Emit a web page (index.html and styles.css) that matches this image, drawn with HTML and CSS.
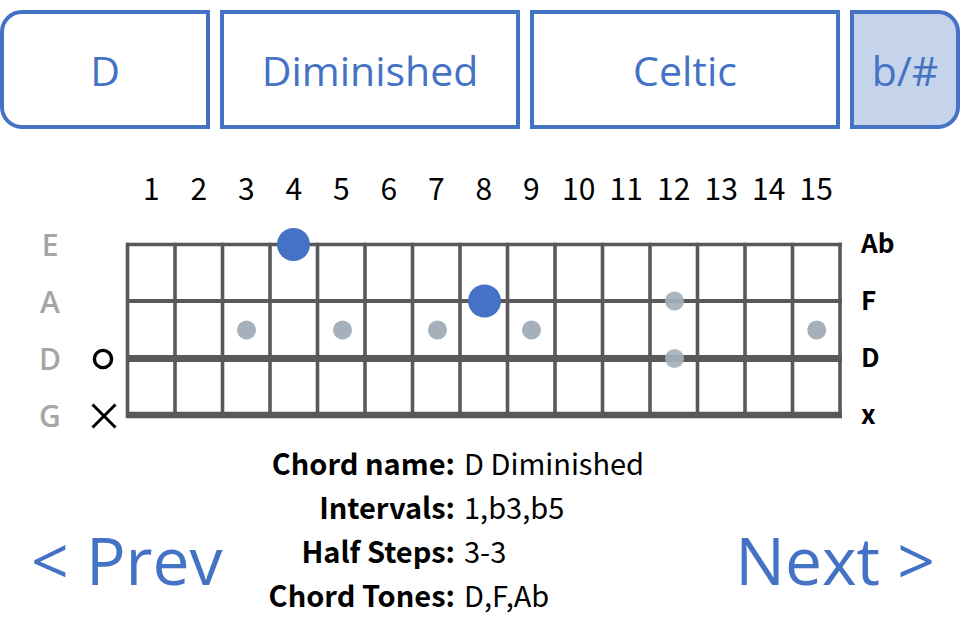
FILE: index.html
```html
<!DOCTYPE html>
<html>
<head>
<meta charset="utf-8">
<link rel="stylesheet" href="styles.css">
</head>
<body>
<div class="app">
  <div class="topbar">
    <div class="btn btn-first">D</div>
    <div class="btn btn-type">Diminished</div>
    <div class="btn btn-scale">Celtic</div>
    <div class="btn btn-last">b/#</div>
  </div>

  <div class="neck">
    <div class="frets">
      <span>1</span><span>2</span><span>3</span><span>4</span><span>5</span>
      <span>6</span><span>7</span><span>8</span><span>9</span><span>10</span>
      <span>11</span><span>12</span><span>13</span><span>14</span><span>15</span>
    </div>

    <div class="names">
      <span>E</span><span>A</span><span>D</span><span>G</span>
    </div>

    <div class="opens">
      <span></span>
      <span></span>
      <span><svg width="24" height="24" viewBox="0 0 24 24"><circle cx="12" cy="12" r="8.6" fill="none" stroke="#000" stroke-width="3.4"/></svg></span>
      <span><svg width="26" height="26" viewBox="0 0 26 26"><path d="M1.5 1.5 L24.5 24.5 M24.5 1.5 L1.5 24.5" stroke="#000" stroke-width="3" fill="none"/></svg></span>
    </div>

    <svg class="board" width="730" height="224" viewBox="0 0 730 224">
      <g fill="#a5b0ba">
        <circle cx="126.5" cy="114" r="9.5"/>
        <circle cx="222.5" cy="114" r="9.5"/>
        <circle cx="317.5" cy="114" r="9.5"/>
        <circle cx="411.5" cy="114" r="9.5"/>
        <circle cx="696.75" cy="114" r="9.5"/>
      </g>
      <g stroke="#595959" fill="none">
        <line x1="6" y1="28.5" x2="722" y2="28.5" stroke-width="3.5"/>
        <line x1="6" y1="85" x2="722" y2="85" stroke-width="4"/>
        <line x1="6" y1="142.5" x2="722" y2="142.5" stroke-width="7"/>
        <line x1="6" y1="199" x2="722" y2="199" stroke-width="6.5"/>
        <g stroke-width="3.6">
          <line x1="7.5" y1="26.75" x2="7.5" y2="202"/>
          <line x1="55" y1="26.75" x2="55" y2="202"/>
          <line x1="102.5" y1="26.75" x2="102.5" y2="202"/>
          <line x1="150" y1="26.75" x2="150" y2="202"/>
          <line x1="197.5" y1="26.75" x2="197.5" y2="202"/>
          <line x1="245" y1="26.75" x2="245" y2="202"/>
          <line x1="292.5" y1="26.75" x2="292.5" y2="202"/>
          <line x1="340" y1="26.75" x2="340" y2="202"/>
          <line x1="387.5" y1="26.75" x2="387.5" y2="202"/>
          <line x1="435" y1="26.75" x2="435" y2="202"/>
          <line x1="482.5" y1="26.75" x2="482.5" y2="202"/>
          <line x1="530" y1="26.75" x2="530" y2="202"/>
          <line x1="577.5" y1="26.75" x2="577.5" y2="202"/>
          <line x1="625" y1="26.75" x2="625" y2="202"/>
          <line x1="672.5" y1="26.75" x2="672.5" y2="202"/>
          <line x1="720" y1="26.75" x2="720" y2="202"/>
        </g>
      </g>
      <g fill="#a5b0ba" fill-opacity="0.92">
        <circle cx="554.5" cy="85" r="9.5"/>
        <circle cx="554.5" cy="142.5" r="9.5"/>
      </g>
      <g fill="#4472c4">
        <circle cx="173.5" cy="28.5" r="16.5"/>
        <circle cx="364.5" cy="85" r="16.5"/>
      </g>
    </svg>

    <div class="notes">
      <span>Ab</span><span>F</span><span>D</span><span>x</span>
    </div>
  </div>

  <div class="bottom">
    <div class="nav nav-prev">&lt; Prev</div>
    <div class="info">
      <span class="label">Chord name:</span><span class="value">D Diminished</span>
      <span class="label">Intervals:</span><span class="value">1,b3,b5</span>
      <span class="label">Half Steps:</span><span class="value">3-3</span>
      <span class="label">Chord Tones:</span><span class="value">D,F,Ab</span>
    </div>
    <div class="nav nav-next">Next &gt;</div>
  </div>
</div>
</body>
</html>
```

FILE: styles.css
```css
html, body {
  margin: 0;
  padding: 0;
  background: #ffffff;
}

.app {
  width: 960px;
  height: 640px;
  overflow: hidden;
  font-family: "Open Sans", "Noto Sans", sans-serif;
}

.topbar {
  display: flex;
  gap: 10px;
  padding-top: 10px;
  height: 119px;
}

.btn {
  box-sizing: border-box;
  height: 119px;
  border: 4px solid #4472c4;
  color: #4472c4;
  font-size: 41px;
  display: flex;
  align-items: center;
  justify-content: center;
  background: #ffffff;
}

.btn-first {
  width: 210px;
  border-radius: 22px 0 0 22px;
}

.btn-type {
  width: 300px;
}

.btn-scale {
  width: 310px;
}

.btn-last {
  width: 110px;
  background: #c5d4ea;
  border-radius: 0 22px 22px 0;
}

.neck {
  display: grid;
  grid-template-columns: 80px 40px 730px 110px;
  grid-template-rows: 40px 224px;
  row-gap: 9px;
  margin-top: 38px;
}

.frets {
  grid-column: 3;
  grid-row: 1;
  display: grid;
  grid-template-columns: repeat(15, 47.5px);
  padding-left: 7.5px;
  font-family: "Noto Sans CJK KR", "Noto Sans", sans-serif;
  font-size: 30px;
  line-height: 40px;
  color: #000000;
  text-align: center;
}

.names,
.opens,
.notes {
  grid-row: 2;
  display: grid;
  grid-template-rows: repeat(4, 57px);
  align-self: start;
}

.names {
  grid-column: 1;
  padding-left: 20px;
  font-family: "Open Sans", sans-serif;
  font-weight: 600;
  font-size: 30px;
  color: #a6a6a6;
  text-align: center;
}

.names span {
  line-height: 57px;
}

.opens {
  grid-column: 2;
}

.opens span {
  display: flex;
  align-items: center;
  padding-left: 11px;
}

.board {
  grid-column: 3;
  grid-row: 2;
  display: block;
}

.notes {
  grid-column: 4;
  margin-top: -3px;
  padding-left: 11px;
  font-family: "Noto Sans CJK KR", "Noto Sans", sans-serif;
  font-weight: 700;
  font-size: 26px;
  color: #000000;
}

.notes span {
  line-height: 57px;
}

.bottom {
  display: grid;
  grid-template-columns: 258px 400px 1fr;
  margin-top: 0;
}

.nav {
  font-family: "Open Sans", sans-serif;
  font-size: 66px;
  line-height: 64px;
  color: #4472c4;
  margin-top: 87px;
}

.nav-prev {
  padding-left: 31px;
}

.nav-next {
  text-align: right;
  padding-right: 25px;
}

.info {
  display: grid;
  grid-template-columns: 197px auto;
  column-gap: 9px;
  font-family: "Noto Sans CJK KR", "Noto Sans", sans-serif;
  font-size: 29px;
  line-height: 44px;
  color: #000000;
}

.label {
  text-align: right;
  font-weight: 700;
}

.value {
  font-weight: 400;
}
```
